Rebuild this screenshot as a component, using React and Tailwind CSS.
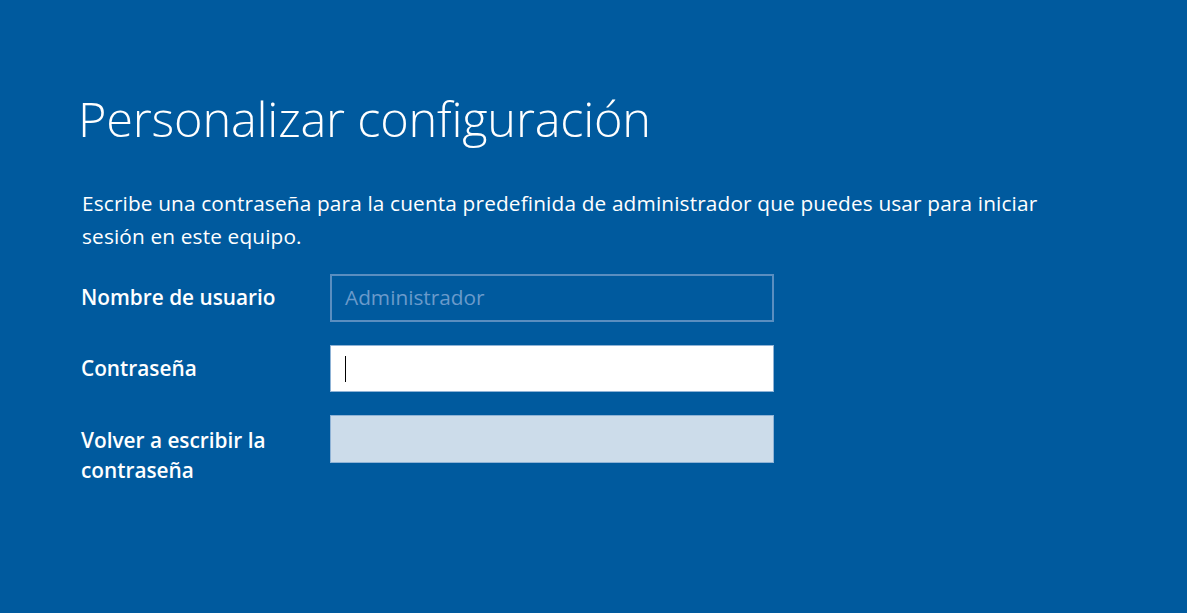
import React from "react";

export default function App() {
  return (
    <div
      className="w-[1187px] h-[613px] bg-[#005a9e] text-white overflow-hidden"
      style={{ fontFamily: '"Open Sans", "Noto Sans", sans-serif' }}
    >
      <div className="pl-[78px] pt-[86px]">
        <h1 className="text-[48.7px] font-light leading-[64px] tracking-[-0.2px]">
          Personalizar configuración
        </h1>

        <p className="mt-[37px] ml-[4px] w-[1010px] text-[20.8px] leading-[33px] tracking-[0.15px]">
          Escribe una contraseña para la cuenta predefinida de administrador que puedes usar para iniciar sesión en este equipo.
        </p>

        <div className="mt-[21px] ml-[3px] flex flex-col gap-[23px]">
          <div className="flex items-center">
            <label className="w-[249px] text-[20.8px] font-semibold">Nombre de usuario</label>
            <div className="w-[444px] h-[48px] border-2 border-[#5a8ec0] flex items-center px-[13px] text-[20.8px] text-[#6a9acb]">
              Administrador
            </div>
          </div>

          <div className="flex items-center">
            <label className="w-[249px] text-[20.8px] font-semibold">Contraseña</label>
            <div className="w-[444px] h-[47px] bg-white border border-[#8fb3d6] flex items-center px-[14px]">
              <span className="w-px h-[26px] bg-black" />
            </div>
          </div>

          <div className="flex items-start">
            <label className="w-[249px] text-[20.8px] font-semibold leading-[30px] pt-[10px]">
              Volver a escribir la
              <br />
              contraseña
            </label>
            <div className="w-[444px] h-[48px] bg-[#ccdcea] border border-[#8fb3d6]" />
          </div>
        </div>
      </div>
    </div>
  );
}
